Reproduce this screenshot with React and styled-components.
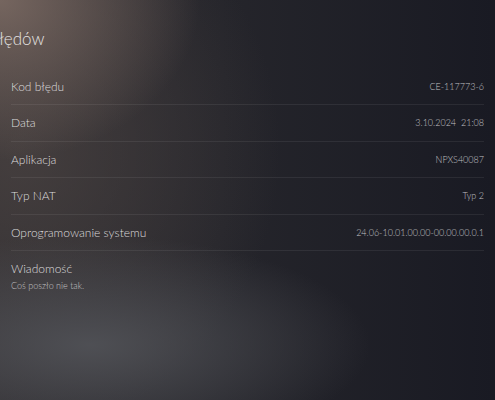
import styled, { createGlobalStyle } from "styled-components";

const GlobalStyle = createGlobalStyle`
  html, body {
    margin: 0;
    padding: 0;
    background: #1a1a22;
  }
  * {
    box-sizing: border-box;
  }
`;

const rows = [
  { label: "Kod błędu", value: "CE-117773-6" },
  { label: "Data", value: "3.10.2024  21:08" },
  { label: "Aplikacja", value: "NPXS40087" },
  { label: "Typ NAT", value: "Typ 2" },
  { label: "Oprogramowanie systemu", value: "24.06-10.01.00.00-00.00.00.0.1" },
];

const App = () => {
  return (
    <Screen>
      <GlobalStyle />
      <Title>łędów</Title>
      <List>
        {rows.map(r => (
          <Row key={r.label}>
            <Label>{r.label}</Label>
            <Value>{r.value}</Value>
          </Row>
        ))}
        <Message>
          <Label>Wiadomość</Label>
          <Sub>Coś poszło nie tak.</Sub>
        </Message>
      </List>
    </Screen>
  );
};

export default App;

const Screen = styled.div`
  width: 495px;
  height: 400px;
  overflow: hidden;
  font-family: Lato, "Open Sans", sans-serif;
  padding-top: 29px;
  background:
    radial-gradient(ellipse 200px 160px at 0 0, rgba(128, 110, 102, 0.85), transparent),
    radial-gradient(ellipse 280px 110px at 90px 345px, rgba(80, 81, 86, 0.95), transparent),
    radial-gradient(ellipse 260px 280px at 20px 150px, rgba(78, 70, 68, 0.7), transparent),
    linear-gradient(90deg, #2e2c30 0%, #25252b 45%, #191a23 100%);
`;

const Title = styled.h1`
  margin: 0 0 19.5px -1px;
  font-size: 17px;
  line-height: 20px;
  font-weight: 300;
  color: #e4e2e1;
`;

const List = styled.div`
  margin: 0 11px;
  display: flex;
  flex-direction: column;
`;

const Row = styled.div`
  height: 36.5px;
  display: flex;
  align-items: center;
  justify-content: space-between;
  border-bottom: 1px solid rgba(255, 255, 255, 0.07);
  padding-top: 1px;
`;

const Label = styled.span`
  font-size: 12px;
  line-height: 16px;
  font-weight: 300;
  color: #dcdbdc;
`;

const Value = styled.span`
  font-size: 9px;
  line-height: 12px;
  font-weight: 300;
  color: #c0c0c4;
  white-space: pre;
`;

const Message = styled.div`
  display: flex;
  flex-direction: column;
  padding-top: 9.5px;
`;

const Sub = styled.span`
  margin-top: 3px;
  font-size: 9px;
  line-height: 12px;
  font-weight: 300;
  color: #c4c3c4;
`;
